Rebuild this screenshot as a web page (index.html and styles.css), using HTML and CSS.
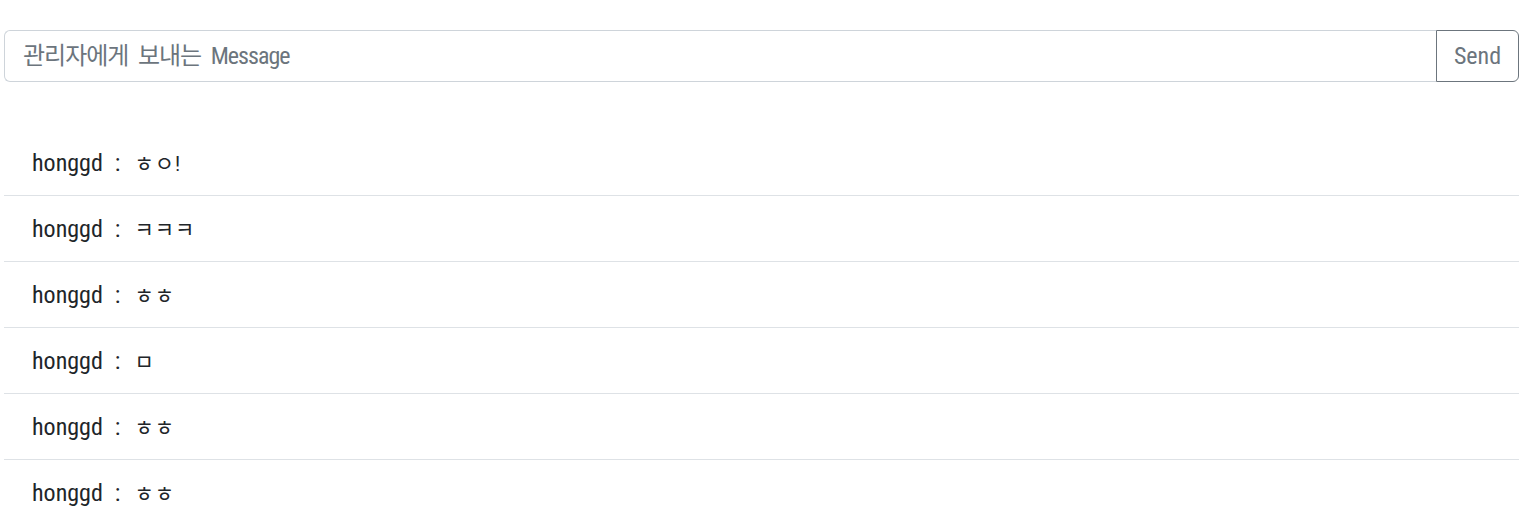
FILE: index.html
```html
<!DOCTYPE html>
<html lang="ko">
<head>
<meta charset="utf-8">
<title>Chat</title>
<link rel="stylesheet" href="styles.css">
</head>
<body>
<div class="wrap">
  <div class="input-group">
    <input class="form-control" type="text" placeholder="관리자에게 보내는 Message">
    <button class="btn" type="button">Send</button>
  </div>
  <ul class="list">
    <li class="item"><span class="name">honggd</span><span class="sep">:</span><span class="msg">ㅎㅇ!</span></li>
    <li class="item"><span class="name">honggd</span><span class="sep">:</span><span class="msg">ㅋㅋㅋ</span></li>
    <li class="item"><span class="name">honggd</span><span class="sep">:</span><span class="msg">ㅎㅎ</span></li>
    <li class="item"><span class="name">honggd</span><span class="sep">:</span><span class="msg">ㅁ</span></li>
    <li class="item"><span class="name">honggd</span><span class="sep">:</span><span class="msg">ㅎㅎ</span></li>
    <li class="item"><span class="name">honggd</span><span class="sep">:</span><span class="msg">ㅎㅎ</span></li>
  </ul>
</div>
</body>
</html>
```
FILE: styles.css
```css
* { box-sizing: border-box; }
html, body { margin: 0; padding: 0; background: #fff; }
body {
  font-family: "Roboto Condensed", Roboto, "Noto Sans CJK KR", sans-serif;
  color: #212529;
  font-size: 24px;
  line-height: 1.5;
}
.wrap {
  padding: 30px 17px 0 4px;
}
.input-group {
  display: flex;
  height: 52px;
}
.form-control {
  flex: 1;
  min-width: 0;
  border: 1px solid #ced4da;
  border-right: none;
  border-radius: 6px 0 0 6px;
  padding: 6px 18px;
  font-family: inherit;
  font-size: 24px;
  color: #212529;
  outline: none;
}
.form-control::placeholder {
  color: #6c757d;
  opacity: 1;
  letter-spacing: -1px;
  word-spacing: 5px;
}
.btn {
  width: 83px;
  border: 1px solid #6c757d;
  border-radius: 0 6px 6px 0;
  background: #fff;
  color: #6c757d;
  font-family: inherit;
  font-size: 24px;
  padding: 0;
}
.list {
  list-style: none;
  margin: 48px 0 0;
  padding: 0;
}
.item {
  display: flex;
  align-items: baseline;
  padding: 15px 28px 14px;
  border-bottom: 1px solid #dee2e6;
}
.item:last-child { border-bottom: none; }
.sep { margin-left: 12px; }
.msg { margin-left: 14px; font-size: 21px; letter-spacing: 1px; }
```
